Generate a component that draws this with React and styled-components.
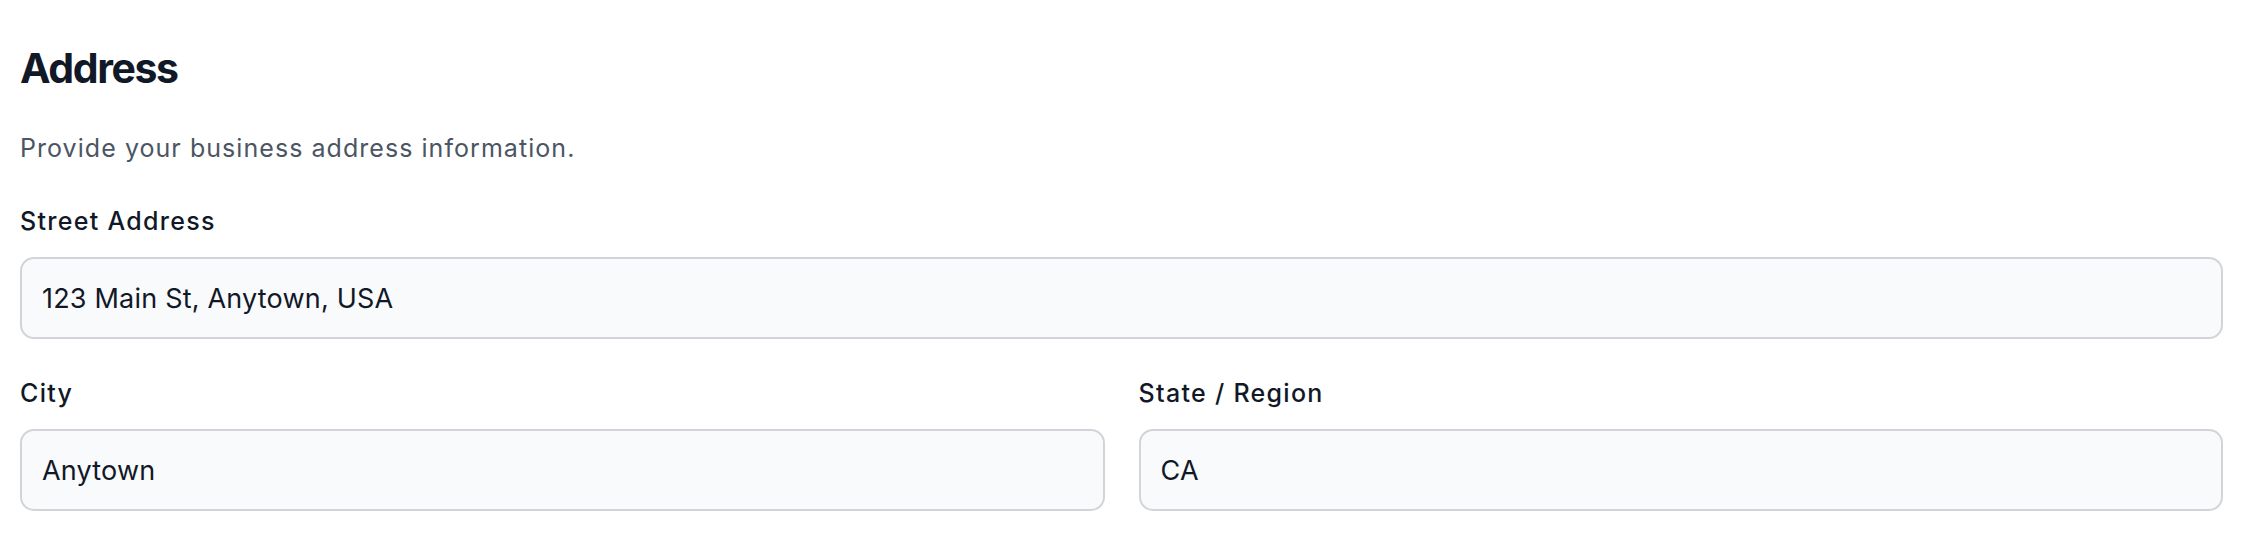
import { styled, createGlobalStyle } from 'styled-components';

const GlobalStyle = createGlobalStyle`
    * {
        box-sizing: border-box;
    }
    body {
        margin: 0;
        background: #ffffff;
        font-family: Inter, "Noto Sans", sans-serif;
    }
`;

const Section = styled.section`
    padding: 40px 29px 0 20px;
`;
const Title = styled.h2`
    margin: 0;
    font-size: 41px;
    line-height: 56px;
    font-weight: 700;
    color: #111827;
    letter-spacing: -1.4px;
`;
const Description = styled.p`
    margin: 34px 0 0;
    font-size: 25px;
    line-height: 36px;
    color: #4b5563;
    letter-spacing: 1.05px;
`;
const Row = styled.div`
    display: grid;
    grid-template-columns: ${(p) => (p.$cols === 2 ? '1fr 1fr' : '1fr')};
    column-gap: 34px;
    margin-top: ${(p) => p.$top}px;
`;
const Field = styled.div`
    display: flex;
    flex-direction: column;
    gap: 18px;
`;
const Label = styled.label`
    font-size: 25px;
    line-height: 36px;
    font-weight: 500;
    color: #111827;
    letter-spacing: 1.3px;
`;
const Input = styled.input`
    height: 82px;
    width: 100%;
    padding: 0 20px;
    border: 2px solid #d1d5db;
    border-radius: 14px;
    background: #f9fafb;
    font-family: Inter, "Noto Sans", sans-serif;
    font-size: 27px;
    letter-spacing: 0.2px;
    color: #111827;
    outline: none;
`;

export default function App() {
    return (
        <>
            <GlobalStyle />
            <Section>
                <Title>Address</Title>
                <Description>Provide your business address information.</Description>
                <Row $top={37}>
                    <Field>
                        <Label htmlFor="street">Street Address</Label>
                        <Input id="street" defaultValue="123 Main St, Anytown, USA" />
                    </Field>
                </Row>
                <Row $cols={2} $top={36}>
                    <Field>
                        <Label htmlFor="city">City</Label>
                        <Input id="city" defaultValue="Anytown" />
                    </Field>
                    <Field>
                        <Label htmlFor="state">State / Region</Label>
                        <Input id="state" defaultValue="CA" />
                    </Field>
                </Row>
            </Section>
        </>
    );
}
